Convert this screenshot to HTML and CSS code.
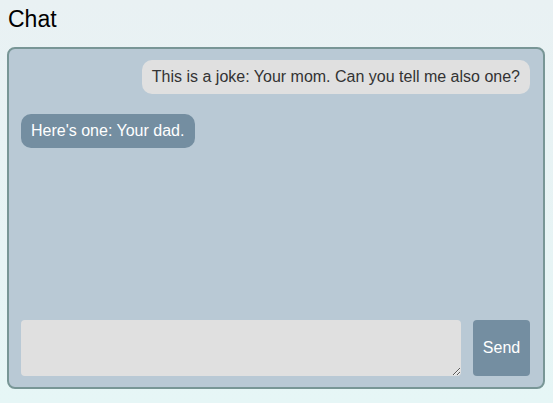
FILE: index.html
```html
<!DOCTYPE html>
<html>
<head>
<meta charset="utf-8">
<link rel="stylesheet" href="styles.css">
</head>
<body>
<h1 class="title">Chat</h1>
<div class="chat">
  <div class="messages">
    <div class="msg msg-user">This is a joke: Your mom. Can you tell me also one?</div>
    <div class="msg msg-bot">Here's one: Your dad.</div>
  </div>
  <div class="composer">
    <textarea class="input"></textarea>
    <button class="send">Send</button>
  </div>
</div>
</body>
</html>
```
FILE: styles.css
```css
html, body {
  height: 100%;
}
body {
  margin: 0;
  padding: 8px 8px 0 7px;
  box-sizing: border-box;
  background: linear-gradient(180deg, #e9f1f3 0%, #e6f6f6 100%);
  font-family: "Liberation Sans", Arial, sans-serif;
  color: #000;
}
.title {
  margin: 0 0 17px 1px;
  font-size: 23px;
  line-height: 22px;
  font-weight: normal;
}
.chat {
  box-sizing: border-box;
  height: 342px;
  border: 2px solid #789696;
  border-radius: 8px;
  background: #b9c9d5;
  padding: 11px 13px 11px 12px;
  display: flex;
  flex-direction: column;
}
.messages {
  flex: 1;
  display: flex;
  flex-direction: column;
  gap: 20px;
}
.msg {
  font-size: 16px;
  line-height: 18px;
  padding: 8px 10px;
  border-radius: 10px;
  max-width: 80%;
}
.msg-user {
  align-self: flex-end;
  background: #e0e0e0;
  color: #333;
}
.msg-bot {
  align-self: flex-start;
  background: #748ea1;
  color: #fff;
  padding: 8px 11px 8px 10px;
}
.composer {
  display: flex;
  gap: 12px;
  height: 56px;
}
.input {
  flex: 1;
  margin: 0;
  border: none;
  border-radius: 4px;
  background: #e0e0e0;
  resize: vertical;
  font-family: inherit;
  font-size: 16px;
  padding: 8px;
}
.send {
  width: 57px;
  border: none;
  border-radius: 4px;
  background: #748ea1;
  color: #fff;
  font-family: inherit;
  font-size: 16px;
  padding: 0;
}
```
